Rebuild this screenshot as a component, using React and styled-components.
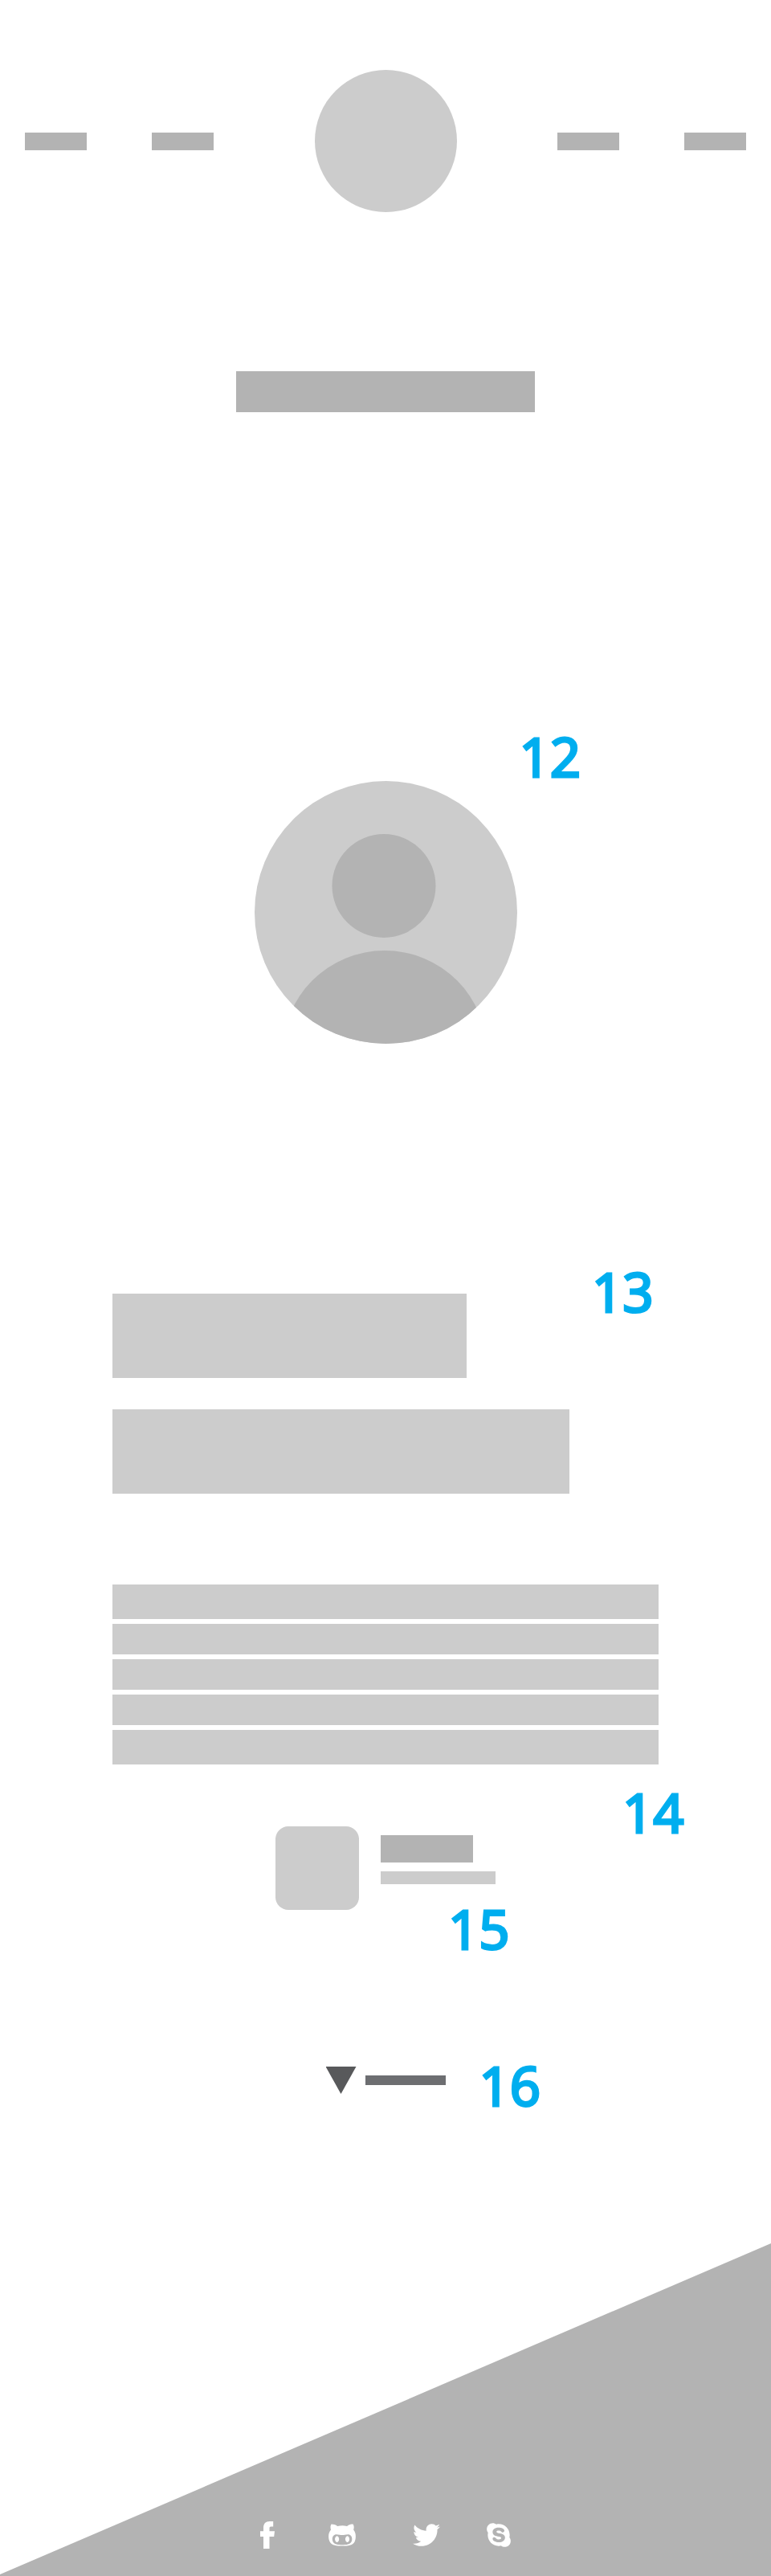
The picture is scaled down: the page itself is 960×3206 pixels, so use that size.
import React from "react";
import styled, { createGlobalStyle } from "styled-components";
import { FaGithubAlt, FaTwitter, FaSkype } from "react-icons/fa";

const light = "#cccccc";
const mid = "#b3b3b3";
const accent = "#00aeef";

const GlobalStyle = createGlobalStyle`
  *, *::before, *::after { box-sizing: border-box; }
  body {
    margin: 0;
    background: #ffffff;
    font-family: "Noto Sans", "Open Sans", sans-serif;
  }
`;

const Page = styled.div`
  display: flex;
  flex-direction: column;
  align-items: center;
`;

const Header = styled.header`
  width: 100%;
  padding: 87px 31px 0;
  display: flex;
  justify-content: space-between;
  align-items: center;
`;

const NavGroup = styled.nav`
  display: flex;
  gap: 81px;
`;

const NavLink = styled.a`
  display: block;
  width: 77px;
  height: 22px;
  background: ${mid};
`;

const Logo = styled.a`
  width: 177px;
  height: 177px;
  border-radius: 50%;
  background: ${light};
`;

const Main = styled.main`
  width: min(680px, 100% - 48px);
  display: flex;
  flex-direction: column;
  align-items: center;
`;

const TitleBar = styled.div`
  margin-top: 198px;
  width: 372px;
  max-width: 100%;
  height: 51px;
  background: ${mid};
`;

const AvatarFrame = styled.figure`
  position: relative;
  margin: 459px 0 0;
  width: 327px;
  height: 327px;
`;

const AvatarArt = styled.svg`
  display: block;
  width: 100%;
  height: 100%;
`;

const Callout = styled.span`
  position: absolute;
  left: ${(p) => p.$left}px;
  top: ${(p) => p.$top}px;
  font-size: 67px;
  line-height: 66px;
  color: ${accent};
  -webkit-text-stroke: 3px ${accent};
  stroke-linejoin: round;
`;

const Headings = styled.section`
  position: relative;
  width: 100%;
  margin-top: 311px;
  display: flex;
  flex-direction: column;
  gap: 39px;
`;

const HeadingBlock = styled.div`
  width: ${(p) => p.$width}px;
  max-width: 100%;
  height: 105px;
  background: ${light};
`;

const Paragraph = styled.section`
  width: 100%;
  margin-top: 113px;
  display: flex;
  flex-direction: column;
  gap: 6px;
`;

const TextLine = styled.div`
  height: ${(p) => (p.$tall ? 43 : 38)}px;
  background: ${light};
`;

const Profile = styled.section`
  position: relative;
  margin-top: 77px;
  display: flex;
  gap: 27px;
`;

const Thumb = styled.div`
  width: 104px;
  height: 104px;
  border-radius: 16px;
  background: ${light};
`;

const ProfileText = styled.div`
  padding-top: 11px;
  display: flex;
  flex-direction: column;
  gap: 11px;
`;

const NameBar = styled.div`
  width: 115px;
  height: 34px;
  background: ${mid};
`;

const RoleBar = styled.div`
  width: 143px;
  height: 16px;
  background: ${light};
`;

const MoreRow = styled.div`
  position: relative;
  margin-top: 195px;
`;

const MoreButton = styled.button`
  display: flex;
  align-items: center;
  gap: 11px;
  padding: 0;
  border: 0;
  background: none;
  cursor: pointer;
`;

const Arrow = styled.span`
  width: 38px;
  height: 34px;
  background: #58595b;
  clip-path: polygon(0 0, 100% 0, 50% 100%);
`;

const MoreLabel = styled.span`
  width: 100px;
  height: 12px;
  background: #6d6e71;
`;

const Footer = styled.footer`
  width: 100%;
  height: 414px;
  margin-top: 186px;
  padding-bottom: 30px;
  display: flex;
  justify-content: center;
  align-items: flex-end;
  background: ${mid};
  clip-path: polygon(0 412px, 100% 0, 100% 100%, 0 100%);
`;

const SocialLink = styled.a`
  width: ${(p) => p.$slot}px;
  height: 42px;
  display: flex;
  justify-content: center;
  align-items: center;
  color: #ffffff;
`;

function FacebookMark({ size }) {
  return (
    <svg height={size} viewBox="0 0 18 34" fill="currentColor" aria-hidden="true">
      <path d="M4 34V19H0V12.3H4V8.5C4 2.8 6.8 0 11.6 0H16.2V6.5H13.4C12 6.5 11.5 7.2 11.5 8.5V12.3H18L17.2 19H11.5V34Z" />
    </svg>
  );
}

const socials = [
  { name: "Facebook", Icon: FacebookMark, slot: 72, size: 34 },
  { name: "GitHub", Icon: FaGithubAlt, slot: 114, size: 36 },
  { name: "Twitter", Icon: FaTwitter, slot: 96, size: 34 },
  { name: "Skype", Icon: FaSkype, slot: 84, size: 34 },
];

export default function App() {
  return (
    <Page>
      <GlobalStyle />
      <Header>
        <NavGroup aria-label="Primary">
          <NavLink href="#one" aria-label="First page" />
          <NavLink href="#two" aria-label="Second page" />
        </NavGroup>
        <Logo href="#home" aria-label="Home" />
        <NavGroup aria-label="Secondary">
          <NavLink href="#three" aria-label="Third page" />
          <NavLink href="#four" aria-label="Fourth page" />
        </NavGroup>
      </Header>

      <Main>
        <TitleBar />

        <AvatarFrame>
          <AvatarArt viewBox="0 0 327 327" aria-hidden="true">
            <clipPath id="avatar-disc">
              <circle cx="163.5" cy="163.5" r="163.5" />
            </clipPath>
            <circle cx="163.5" cy="163.5" r="163.5" fill={light} />
            <circle cx="161" cy="130.5" r="64.5" fill={mid} />
            <circle cx="162" cy="338.5" r="127.5" fill={mid} clipPath="url(#avatar-disc)" />
          </AvatarArt>
          <Callout $left={330} $top={-64}>12</Callout>
        </AvatarFrame>

        <Headings>
          <HeadingBlock $width={441} />
          <HeadingBlock $width={569} />
          <Callout $left={597} $top={-36}>13</Callout>
        </Headings>

        <Paragraph>
          <TextLine $tall />
          <TextLine />
          <TextLine />
          <TextLine />
          <TextLine $tall />
        </Paragraph>

        <Profile>
          <Thumb />
          <ProfileText>
            <NameBar />
            <RoleBar />
          </ProfileText>
          <Callout $left={432} $top={-51}>14</Callout>
          <Callout $left={215} $top={94}>15</Callout>
        </Profile>

        <MoreRow>
          <MoreButton type="button" aria-label="Show more">
            <Arrow />
            <MoreLabel />
          </MoreButton>
          <Callout $left={191} $top={-10}>16</Callout>
        </MoreRow>
      </Main>

      <Footer>
        {socials.map(({ name, Icon, slot, size }) => (
          <SocialLink key={name} href={`#${name.toLowerCase()}`} aria-label={name} $slot={slot}>
            <Icon size={size} />
          </SocialLink>
        ))}
      </Footer>
    </Page>
  );
}
